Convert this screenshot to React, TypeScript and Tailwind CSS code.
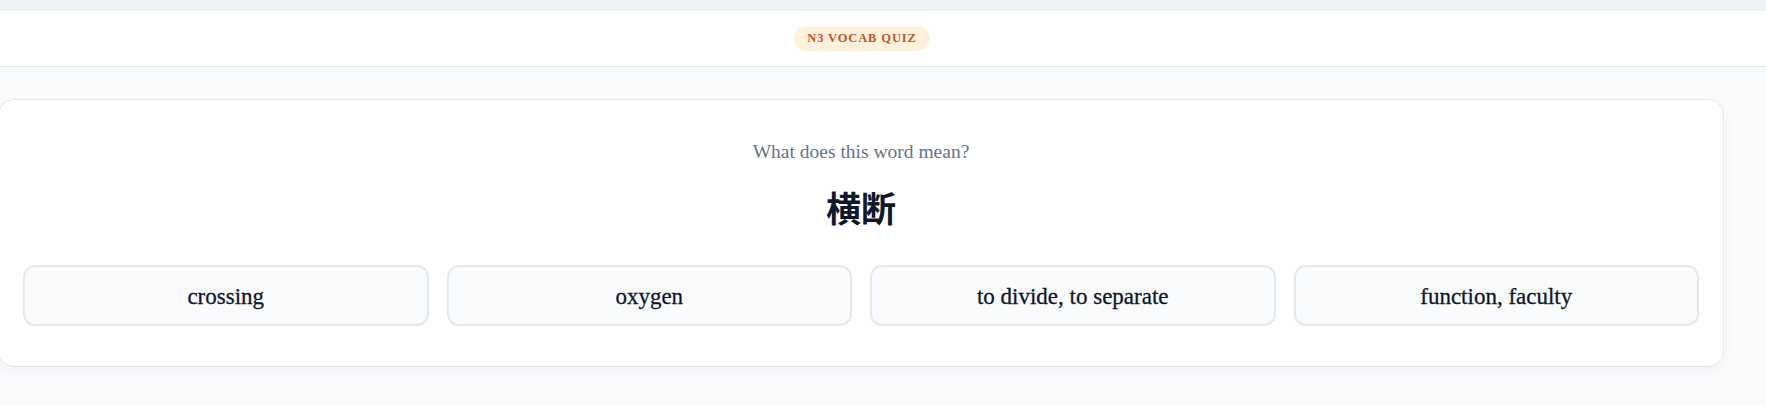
import React from "react";

const serif = { fontFamily: '"Liberation Serif", "Noto Sans CJK JP", serif' };

export default function App() {
  const options = ["crossing", "oxygen", "to divide, to separate", "function, faculty"];
  return (
    <div className="min-h-[405px] w-full overflow-hidden bg-[#f8fafc]" style={serif}>
      <div className="h-[11px] w-full bg-[#eff2f7]" />
      <header className="h-[56px] w-full border-b border-[#e2e8f0] bg-white">
        <div className="flex h-[55px] w-[1724px] items-center justify-center">
          <span className="rounded-full bg-[#fdf1de] px-[13px] py-[4px] text-[12.5px] font-bold uppercase leading-[17px] tracking-[0.07em] text-[#c2562a]">
            N3 Vocab Quiz
          </span>
        </div>
      </header>
      <main className="w-[1724px] pt-8">
        <div className="-ml-[2px] w-[1726px] rounded-2xl border border-[#e5e7eb] bg-white px-6 pt-10 pb-10 shadow-[0_4px_14px_rgba(15,23,42,0.04)]">
          <p className="text-center text-[19.5px] leading-6 text-[#64748b]">What does this word mean?</p>
          <h1
            className="mt-[23px] text-center text-[35px] font-bold leading-10 text-[#0f172a]"
            style={{ fontFamily: '"Noto Sans CJK JP", sans-serif' }}
          >
            横断
          </h1>
          <div className="mt-[38px] grid grid-cols-4 gap-[18px]">
            {options.map((o) => (
              <button
                key={o}
                className="flex h-[61px] items-center justify-center rounded-xl border-2 border-[#e2e8f0] bg-[#f8fafc] pt-[3px] text-[23px] text-[#0f172a] [-webkit-text-stroke:0.3px_#0f172a]"
                style={serif}
              >
                {o}
              </button>
            ))}
          </div>
        </div>
      </main>
    </div>
  );
}
